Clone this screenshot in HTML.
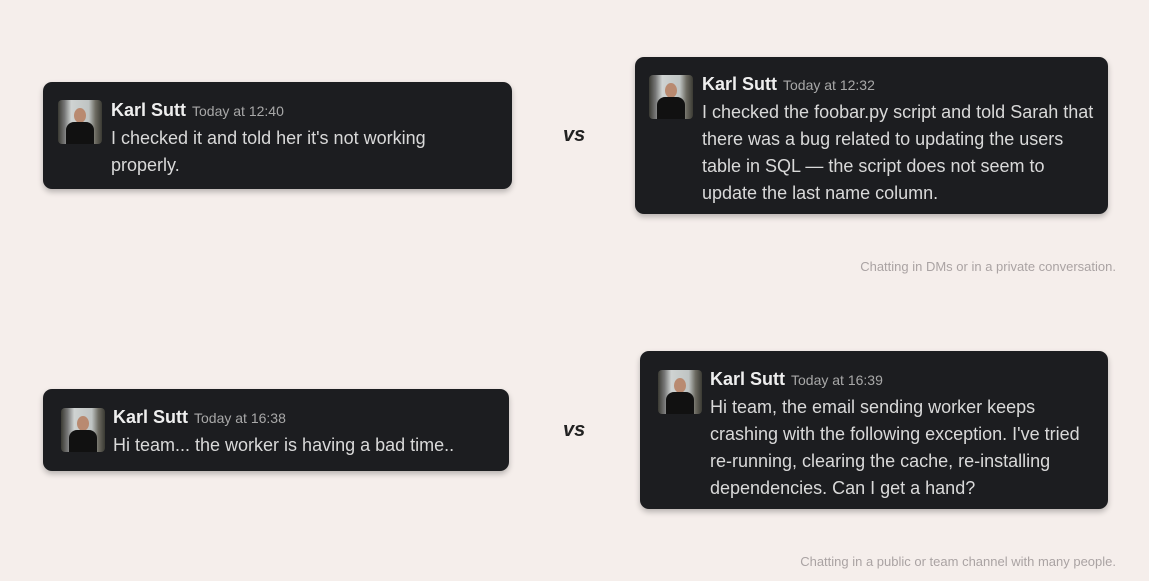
<!DOCTYPE html>
<html><head><style>
body{margin:0;width:1149px;height:581px;background:#f5eeeb;position:relative;overflow:hidden;font-family:"Liberation Sans",sans-serif}
.card{position:absolute;background:#1c1d20;border-radius:9px;box-shadow:0 3px 6px rgba(0,0,0,.25);color:#d9d9d9}
.av{position:absolute;width:44px;height:44px;border-radius:4px;background:linear-gradient(90deg,#3a3a33 0,#777 15%,#cfd3d2 30%,#bfc4c3 70%,#6d6b62 85%,#3a3a33);overflow:hidden}
.av:before{content:"";position:absolute;left:16px;top:8px;width:12px;height:15px;border-radius:50%;background:#b98a70}
.av:after{content:"";position:absolute;left:8px;top:22px;width:28px;height:22px;border-radius:8px 8px 0 0;background:#111}
.txt{position:absolute;font-size:18px;line-height:27px}
.nm{font-weight:bold;color:#eee;font-size:18px}
.tm{font-size:14px;color:#a8a8a8;margin-left:6px}
.vs{position:absolute;font-weight:bold;font-style:italic;font-size:20px;color:#222}
.cap{position:absolute;right:33px;font-size:13px;color:#aaa3a3}
</style></head><body>
<div class="card" style="left:43px;top:82px;width:469px;height:107px">
<div class="av" style="left:15px;top:18px"></div>
<div class="txt" style="left:68px;top:15px"><span class="nm">Karl Sutt</span><span class="tm">Today at 12:40</span><br>I checked it and told her it's not working<br>properly.</div></div>
<div class="vs" style="left:563px;top:124px">vs</div>
<div class="card" style="left:635px;top:57px;width:473px;height:157px">
<div class="av" style="left:14px;top:18px"></div>
<div class="txt" style="left:67px;top:14px"><span class="nm">Karl Sutt</span><span class="tm">Today at 12:32</span><br>I checked the foobar.py script and told Sarah that<br>there was a bug related to updating the users<br>table in SQL — the script does not seem to<br>update the last name column.</div></div>
<div class="cap" style="top:259px">Chatting in DMs or in a private conversation.</div>
<div class="card" style="left:43px;top:389px;width:466px;height:82px">
<div class="av" style="left:18px;top:19px"></div>
<div class="txt" style="left:70px;top:15px"><span class="nm">Karl Sutt</span><span class="tm">Today at 16:38</span><br>Hi team... the worker is having a bad time..</div></div>
<div class="vs" style="left:563px;top:419px">vs</div>
<div class="card" style="left:640px;top:351px;width:468px;height:158px">
<div class="av" style="left:18px;top:19px"></div>
<div class="txt" style="left:70px;top:15px"><span class="nm">Karl Sutt</span><span class="tm">Today at 16:39</span><br>Hi team, the email sending worker keeps<br>crashing with the following exception. I've tried<br>re-running, clearing the cache, re-installing<br>dependencies. Can I get a hand?</div></div>
<div class="cap" style="top:554px">Chatting in a public or team channel with many people.</div>
</body></html>
